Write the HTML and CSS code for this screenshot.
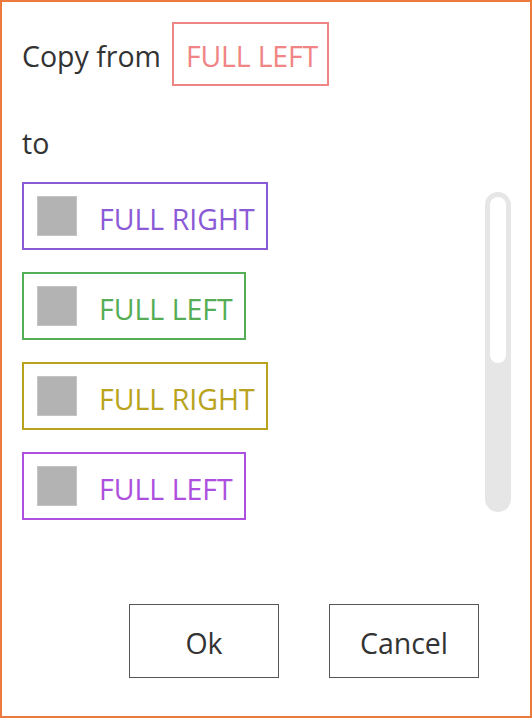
FILE: index.html
```html
<!DOCTYPE html>
<html lang="en">
<head>
<meta charset="utf-8">
<title>Copy layout</title>
<link rel="stylesheet" href="styles.css">
</head>
<body>
<div class="dialog">
  <div class="from-row">
    <span class="label">Copy from</span>
    <span class="tag tag-src">FULL LEFT</span>
  </div>
  <div class="to-label">to</div>
  <div class="list-area">
    <ul class="list">
      <li class="item c-purple"><span class="swatch"></span><span class="item-text">FULL RIGHT</span></li>
      <li class="item c-green"><span class="swatch"></span><span class="item-text">FULL LEFT</span></li>
      <li class="item c-gold"><span class="swatch"></span><span class="item-text">FULL RIGHT</span></li>
      <li class="item c-magenta"><span class="swatch"></span><span class="item-text">FULL LEFT</span></li>
    </ul>
    <div class="scrollbar"><div class="thumb"></div></div>
  </div>
  <div class="actions">
    <button class="btn">Ok</button>
    <button class="btn">Cancel</button>
  </div>
</div>
</body>
</html>
```

FILE: styles.css
```css
* { box-sizing: border-box; }
html, body { margin: 0; padding: 0; background: #fff; }
body {
  font-family: "Open Sans", "Noto Sans", sans-serif;
  color: #333333;
}
.dialog {
  width: 532px;
  height: 718px;
  border: 2px solid #ec7a3c;
  padding: 20px 19px 0 20px;
  display: flex;
  flex-direction: column;
}
.from-row {
  display: flex;
  align-items: center;
  gap: 11px;
  height: 64px;
}
.label {
  font-size: 28.5px;
  line-height: 30px;
  padding-top: 3px;
}
.tag {
  height: 64px;
  display: flex;
  align-items: center;
  padding: 3px 9px 0 12px;
  border: 2px solid #f08585;
  color: #f08585;
  font-size: 28.5px;
  line-height: 30px;
  letter-spacing: -0.2px;
}
.to-label {
  margin-top: 39px;
  font-size: 28.5px;
  line-height: 36px;
  height: 36px;
}
.list-area {
  margin-top: 21px;
  display: flex;
  align-items: flex-start;
}
.list {
  list-style: none;
  margin: 0;
  padding: 0;
  display: flex;
  flex-direction: column;
  align-items: flex-start;
  gap: 22px;
}
.item {
  height: 68px;
  display: flex;
  align-items: center;
  padding: 0 11px 0 13px;
  border: 2px solid currentColor;
  gap: 22px;
}
.swatch {
  width: 40px;
  height: 40px;
  background: #b3b3b3;
  border: 1px solid #c4c4c4;
  flex: none;
}
.item-text {
  font-size: 28.5px;
  line-height: 30px;
  padding-top: 6px;
}
.c-purple { color: #8b5ad6; }
.c-green { color: #55ad55; }
.c-gold { color: #b9a31d; }
.c-magenta { color: #ad50dd; }
.scrollbar {
  margin-left: auto;
  margin-top: 10px;
  width: 26px;
  height: 320px;
  border-radius: 13px;
  background: #e6e6e6;
  padding: 5px;
  flex: none;
}
.thumb {
  width: 16px;
  height: 166px;
  border-radius: 8px;
  background: #fff;
}
.actions {
  margin-top: 84px;
  display: flex;
  justify-content: flex-end;
  gap: 50px;
  padding-right: 32px;
}
.btn {
  width: 150px;
  height: 74px;
  background: #fff;
  border: 1px solid #555;
  font-family: "Open Sans", "Noto Sans", sans-serif;
  font-size: 28.5px;
  color: #333;
  padding: 3px 0 0 0;
  cursor: pointer;
}
```
